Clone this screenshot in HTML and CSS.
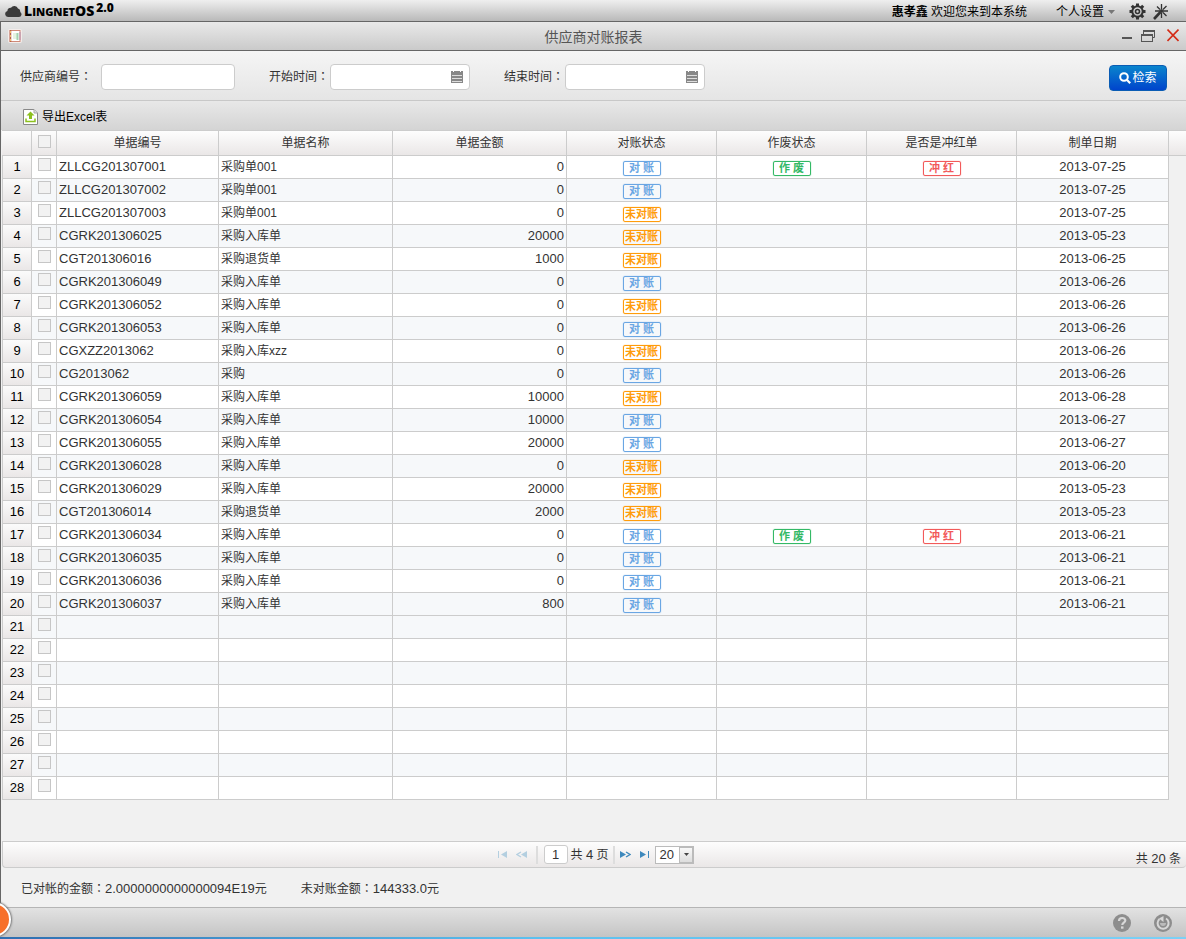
FILE: index.html
```
<!DOCTYPE html>
<html lang="zh-CN">
<head>
<meta charset="utf-8">
<title>供应商对账报表</title>
<link rel="stylesheet" href="styles.css">
</head>
<body>
<header class="topbar">
  <div class="brand">
    <svg class="cloud" width="17" height="12" viewBox="0 0 17 12"><path d="M3 12a3 3 0 0 1-.6-5.900A3.200 3.200 0 0 1 6 2.800 4 4 0 0 1 13 3.400 3.300 3.300 0 0 1 15.200 7 2.700 2.700 0 0 1 14 12z" fill="#3b3b3b"/></svg>
    <span class="name">L<small>INGNET</small>OS</span><sup class="version">2.0</sup>
  </div>
  <div class="user"><span><b>惠孝鑫</b> 欢迎您来到本系统</span>
    <button class="plain personal" type="button">个人设置<svg width="7" height="4" viewBox="0 0 7 4"><path d="M0 0h7L3.500 4z" fill="#777"/></svg></button>
    <button class="plain" type="button" aria-label="设置"><svg width="17" height="17" viewBox="0 0 17 17" fill="none" stroke="#333"><circle cx="8.500" cy="8.500" r="5.200" stroke-width="2"/><circle cx="8.500" cy="8.500" r="2" stroke-width="1.600"/><path stroke-width="3" d="M8.500 .5v2.500M8.500 14v2.500M.5 8.500H3M14 8.500h2.500M2.800 2.800l1.700 1.700M12.500 12.500l1.700 1.700M14.200 2.800l-1.700 1.700M4.500 12.500l-1.700 1.700"/></svg></button>
    <button class="plain" type="button" aria-label="换肤"><svg width="16" height="16" viewBox="0 0 16 16" stroke="#333" fill="none"><path d="M8.500 0v5M8.500 9v5M2 7h5M10 7h5M4 2.500L7 5.500M10 8.500l3.500 3.500M13.500 2L10 5.500" stroke-width="1.300"/><path d="M7.500 8L1 15" stroke-width="2.600"/><circle cx="8.500" cy="7" r="1.500" fill="#333"/></svg></button>
  </div>
</header>
<main class="window">
  <div class="titlebar">
    <svg width="14" height="14" viewBox="0 0 14 14"><rect width="14" height="14" rx="2" fill="#f3ecea"/><rect x="2" y="1.500" width="10" height="11" fill="#fff" stroke="#cf8a78"/><path d="M2.500 1v12" stroke="#b5604f" stroke-width="1.500"/><path d="M2.500 2v2M2.500 6v2M2.500 10v2" stroke="#f0c36a"/><path d="M5 4h4v6H5z" fill="#e6f3e2"/><path d="M9.500 4v7" stroke="#a2d3b0" stroke-width="2"/><path d="M12 3v8" stroke="#b58bb0"/></svg>
    <h1>供应商对账报表</h1>
    <div class="controls">
      <button class="plain" type="button" aria-label="最小化"><svg width="10" height="14" viewBox="0 0 10 14"><path d="M0 9h10" stroke="#555" stroke-width="2"/></svg></button>
      <button class="plain" type="button" aria-label="还原"><svg width="14" height="14" viewBox="0 0 14 14" fill="none" stroke="#555"><path d="M2.500 5V1.500h11v7H12"/><path d="M2 2h12" stroke-width="2"/><rect x=".5" y="5.500" width="11" height="7"/><path d="M0 6h12" stroke-width="2"/></svg></button>
      <button class="plain" type="button" aria-label="关闭"><svg width="12" height="14" viewBox="0 0 12 14"><path d="M.5 .5l11 11.500M11.500 .5l-11 11.500" stroke="#d42b16" stroke-width="1.600"/></svg></button>
    </div>
  </div>
  <form class="search">
    <div class="field supplier"><label for="supplier">供应商编号<span class="colon" lang="zh-TW">：</span></label><input id="supplier" class="box" type="text"></div>
    <div class="field"><label for="start">开始时间<span class="colon" lang="zh-TW">：</span></label><div class="date box"><input id="start" type="text"><svg width="12" height="13" viewBox="0 0 12 13"><path d="M0 1h12v12H0z" fill="#888"/><path d="M2.500 0v2M9.500 0v2" stroke="#fff"/><path d="M1 5.500h10M1 8.500h10M1 11.500h10" stroke="#ddd"/></svg></div></div>
    <div class="field"><label for="end">结束时间<span class="colon" lang="zh-TW">：</span></label><div class="date box"><input id="end" type="text"><svg width="12" height="13" viewBox="0 0 12 13"><path d="M0 1h12v12H0z" fill="#888"/><path d="M2.500 0v2M9.500 0v2" stroke="#fff"/><path d="M1 5.500h10M1 8.500h10M1 11.500h10" stroke="#ddd"/></svg></div></div>
    <button class="submit" type="button"><svg width="12" height="12" viewBox="0 0 12 12" fill="none" stroke="#fff"><circle cx="5" cy="5" r="3.800" stroke-width="2"/><path d="M7.800 7.800l3.400 3.400" stroke-width="2.200"/></svg>检索</button>
  </form>
  <div class="toolbar"><button class="plain export" type="button"><svg width="15" height="16" viewBox="0 0 15 16"><path d="M.5.5h10.500l3.500 3.500v11.500H.5z" fill="#fff" stroke="#888"/><path d="M11 .5V4h3.500" fill="#ddd" stroke="#aaa"/><path d="M7.500 2.500l4 4H9v3.500H6V6.500H3.500z" fill="#8cc01e"/><path d="M3 9.500v3h9v-3" fill="none" stroke="#8cc01e" stroke-width="1.500"/></svg>导出Excel表</button></div>
  <section class="grid">
    <table>
      <colgroup><col class="c-num"><col class="c-check"><col class="c-code"><col class="c-wide"><col class="c-wide"><col class="c-state"><col class="c-state"><col class="c-state"><col class="c-date"><col class="c-gap"></colgroup>
      <thead><tr><th></th><th class="pick"><input type="checkbox" aria-label="全选"></th><th>单据编号</th><th>单据名称</th><th>单据金额</th><th>对账状态</th><th>作废状态</th><th>是否是冲红单</th><th>制单日期</th><th></th></tr></thead>
      <tbody>
<tr><th>1</th><td class="pick"><input type="checkbox" aria-label="第1行"></td><td class="code">ZLLCG201307001</td><td>采购单001</td><td class="num">0</td><td class="state"><span class="stamp blue">对 账</span></td><td class="state"><span class="stamp green">作 废</span></td><td class="state"><span class="stamp red">冲 红</span></td><td class="day">2013-07-25</td><td></td></tr>
<tr><th>2</th><td class="pick"><input type="checkbox" aria-label="第2行"></td><td class="code">ZLLCG201307002</td><td>采购单001</td><td class="num">0</td><td class="state"><span class="stamp blue">对 账</span></td><td></td><td></td><td class="day">2013-07-25</td><td></td></tr>
<tr><th>3</th><td class="pick"><input type="checkbox" aria-label="第3行"></td><td class="code">ZLLCG201307003</td><td>采购单001</td><td class="num">0</td><td class="state"><span class="stamp orange">未对账</span></td><td></td><td></td><td class="day">2013-07-25</td><td></td></tr>
<tr><th>4</th><td class="pick"><input type="checkbox" aria-label="第4行"></td><td class="code">CGRK201306025</td><td>采购入库单</td><td class="num">20000</td><td class="state"><span class="stamp orange">未对账</span></td><td></td><td></td><td class="day">2013-05-23</td><td></td></tr>
<tr><th>5</th><td class="pick"><input type="checkbox" aria-label="第5行"></td><td class="code">CGT201306016</td><td>采购退货单</td><td class="num">1000</td><td class="state"><span class="stamp orange">未对账</span></td><td></td><td></td><td class="day">2013-06-25</td><td></td></tr>
<tr><th>6</th><td class="pick"><input type="checkbox" aria-label="第6行"></td><td class="code">CGRK201306049</td><td>采购入库单</td><td class="num">0</td><td class="state"><span class="stamp blue">对 账</span></td><td></td><td></td><td class="day">2013-06-26</td><td></td></tr>
<tr><th>7</th><td class="pick"><input type="checkbox" aria-label="第7行"></td><td class="code">CGRK201306052</td><td>采购入库单</td><td class="num">0</td><td class="state"><span class="stamp orange">未对账</span></td><td></td><td></td><td class="day">2013-06-26</td><td></td></tr>
<tr><th>8</th><td class="pick"><input type="checkbox" aria-label="第8行"></td><td class="code">CGRK201306053</td><td>采购入库单</td><td class="num">0</td><td class="state"><span class="stamp blue">对 账</span></td><td></td><td></td><td class="day">2013-06-26</td><td></td></tr>
<tr><th>9</th><td class="pick"><input type="checkbox" aria-label="第9行"></td><td class="code">CGXZZ2013062</td><td>采购入库xzz</td><td class="num">0</td><td class="state"><span class="stamp orange">未对账</span></td><td></td><td></td><td class="day">2013-06-26</td><td></td></tr>
<tr><th>10</th><td class="pick"><input type="checkbox" aria-label="第10行"></td><td class="code">CG2013062</td><td>采购</td><td class="num">0</td><td class="state"><span class="stamp blue">对 账</span></td><td></td><td></td><td class="day">2013-06-26</td><td></td></tr>
<tr><th>11</th><td class="pick"><input type="checkbox" aria-label="第11行"></td><td class="code">CGRK201306059</td><td>采购入库单</td><td class="num">10000</td><td class="state"><span class="stamp orange">未对账</span></td><td></td><td></td><td class="day">2013-06-28</td><td></td></tr>
<tr><th>12</th><td class="pick"><input type="checkbox" aria-label="第12行"></td><td class="code">CGRK201306054</td><td>采购入库单</td><td class="num">10000</td><td class="state"><span class="stamp blue">对 账</span></td><td></td><td></td><td class="day">2013-06-27</td><td></td></tr>
<tr><th>13</th><td class="pick"><input type="checkbox" aria-label="第13行"></td><td class="code">CGRK201306055</td><td>采购入库单</td><td class="num">20000</td><td class="state"><span class="stamp blue">对 账</span></td><td></td><td></td><td class="day">2013-06-27</td><td></td></tr>
<tr><th>14</th><td class="pick"><input type="checkbox" aria-label="第14行"></td><td class="code">CGRK201306028</td><td>采购入库单</td><td class="num">0</td><td class="state"><span class="stamp orange">未对账</span></td><td></td><td></td><td class="day">2013-06-20</td><td></td></tr>
<tr><th>15</th><td class="pick"><input type="checkbox" aria-label="第15行"></td><td class="code">CGRK201306029</td><td>采购入库单</td><td class="num">20000</td><td class="state"><span class="stamp orange">未对账</span></td><td></td><td></td><td class="day">2013-05-23</td><td></td></tr>
<tr><th>16</th><td class="pick"><input type="checkbox" aria-label="第16行"></td><td class="code">CGT201306014</td><td>采购退货单</td><td class="num">2000</td><td class="state"><span class="stamp orange">未对账</span></td><td></td><td></td><td class="day">2013-05-23</td><td></td></tr>
<tr><th>17</th><td class="pick"><input type="checkbox" aria-label="第17行"></td><td class="code">CGRK201306034</td><td>采购入库单</td><td class="num">0</td><td class="state"><span class="stamp blue">对 账</span></td><td class="state"><span class="stamp green">作 废</span></td><td class="state"><span class="stamp red">冲 红</span></td><td class="day">2013-06-21</td><td></td></tr>
<tr><th>18</th><td class="pick"><input type="checkbox" aria-label="第18行"></td><td class="code">CGRK201306035</td><td>采购入库单</td><td class="num">0</td><td class="state"><span class="stamp blue">对 账</span></td><td></td><td></td><td class="day">2013-06-21</td><td></td></tr>
<tr><th>19</th><td class="pick"><input type="checkbox" aria-label="第19行"></td><td class="code">CGRK201306036</td><td>采购入库单</td><td class="num">0</td><td class="state"><span class="stamp blue">对 账</span></td><td></td><td></td><td class="day">2013-06-21</td><td></td></tr>
<tr><th>20</th><td class="pick"><input type="checkbox" aria-label="第20行"></td><td class="code">CGRK201306037</td><td>采购入库单</td><td class="num">800</td><td class="state"><span class="stamp blue">对 账</span></td><td></td><td></td><td class="day">2013-06-21</td><td></td></tr>
<tr><th>21</th><td class="pick"><input type="checkbox" aria-label="第21行"></td><td></td><td></td><td></td><td></td><td></td><td></td><td></td><td></td></tr>
<tr><th>22</th><td class="pick"><input type="checkbox" aria-label="第22行"></td><td></td><td></td><td></td><td></td><td></td><td></td><td></td><td></td></tr>
<tr><th>23</th><td class="pick"><input type="checkbox" aria-label="第23行"></td><td></td><td></td><td></td><td></td><td></td><td></td><td></td><td></td></tr>
<tr><th>24</th><td class="pick"><input type="checkbox" aria-label="第24行"></td><td></td><td></td><td></td><td></td><td></td><td></td><td></td><td></td></tr>
<tr><th>25</th><td class="pick"><input type="checkbox" aria-label="第25行"></td><td></td><td></td><td></td><td></td><td></td><td></td><td></td><td></td></tr>
<tr><th>26</th><td class="pick"><input type="checkbox" aria-label="第26行"></td><td></td><td></td><td></td><td></td><td></td><td></td><td></td><td></td></tr>
<tr><th>27</th><td class="pick"><input type="checkbox" aria-label="第27行"></td><td></td><td></td><td></td><td></td><td></td><td></td><td></td><td></td></tr>
<tr><th>28</th><td class="pick"><input type="checkbox" aria-label="第28行"></td><td></td><td></td><td></td><td></td><td></td><td></td><td></td><td></td></tr>
      </tbody>
    </table>
    <div class="pager">
      <div class="pages">
        <button class="plain" type="button" aria-label="首页" disabled><svg width="11" height="7" viewBox="0 0 11 7" fill="#b4cfe0"><path d="M1 0h1v7H1zM10 0v7L4 3.500z"/></svg></button>
        <button class="plain" type="button" aria-label="上一页" disabled><svg width="12" height="7" viewBox="0 0 12 7"><path d="M5 1L1 3.500 5 6" fill="none" stroke="#b4cfe0" stroke-width="1.300"/><path d="M11 0v7L5 3.500z" fill="#b4cfe0"/></svg></button>
        <i class="sep"></i>
        <input class="page" type="text" value="1" aria-label="页码">
        <span class="count">共 <span class="digits">4</span> 页</span>
        <i class="sep"></i>
        <button class="plain next" type="button" aria-label="下一页"><svg width="12" height="7" viewBox="0 0 12 7"><path d="M7 1l4 2.500L7 6" fill="none" stroke="#4089bb" stroke-width="1.300"/><path d="M1 0v7l6-3.500z" fill="#3e89bd"/></svg></button>
        <button class="plain" type="button" aria-label="末页"><svg width="11" height="7" viewBox="0 0 11 7" fill="#3e89bd"><path d="M9 0h1v7H9zM1 0v7l6-3.500z"/></svg></button>
        <div class="size"><select aria-label="每页条数"><option>20</option></select><span class="arrow"><svg width="5" height="3" viewBox="0 0 5 3"><path d="M0 0h5L2.500 3z" fill="#444"/></svg></span></div>
      </div>
      <span class="total">共 <span class="digits">20</span> 条</span>
    </div>
  </section>
  <div class="sums"><span>已对帐的金额<span class="colon" lang="zh-TW">：</span><span class="digits">2.0000000000000094E19</span>元</span><span>未对账金额<span class="colon" lang="zh-TW">：</span><span class="digits">144333.0</span>元</span></div>
</main>
<footer class="taskbar">
  <span class="orb"></span>
  <button class="plain" type="button" aria-label="帮助"><svg width="18" height="18" viewBox="0 0 18 18"><circle cx="9" cy="9" r="9" fill="#8d8d8d"/><path d="M6 7c0-4 6.300-3.800 6.300-.6 0 2.200-3 2.100-3 4.500" fill="none" stroke="#d8d8d8" stroke-width="2.200"/><path d="M8 12.400h2.500v2.300H8z" fill="#d8d8d8"/></svg></button>
  <button class="plain" type="button" aria-label="刷新"><svg width="18" height="18" viewBox="0 0 18 18"><circle cx="9" cy="9" r="9" fill="#8d8d8d"/><path d="M5.500 5A5.500 5.500 0 1 0 12 4.500" fill="none" stroke="#d8d8d8" stroke-width="2"/><path d="M9.500 2v6L5 4.500z" fill="#d8d8d8"/><path d="M6 9a3 3 0 0 0 6 0" fill="#bbb"/></svg></button>
</footer>
</body>
</html>
```
FILE: styles.css
```
* { box-sizing: border-box; }
body {
  margin: 0;
  min-height: 100vh;
  display: flex;
  flex-direction: column;
  background: #f1f1f1;
  color: #333;
  font: 12px/16px "Liberation Sans", "Noto Sans CJK SC", sans-serif;
}
svg { display: block; flex: none; }
input, select, button { font: inherit; color: inherit; margin: 0; }
.plain { background: none; border: 0; padding: 0; }
.digits { font-size: 13px; }
.colon { font-family: "Noto Sans CJK TC", sans-serif; line-height: 1; }

.topbar {
  height: 22px;
  display: flex;
  justify-content: space-between;
  background: linear-gradient(#efefef, #b9b9b9);
  border-bottom: 1px solid #666;
  color: #000;
}
.brand { display: flex; padding-left: 5px; }
.cloud { margin-top: 5px; }
.name { margin-left: 2px; font: 800 14px/21px "Open Sans", sans-serif; }
.name small { font-size: 11px; }
.version { margin-left: 2px; font: 800 12px/16px "Open Sans", sans-serif; }
.user { display: flex; align-items: center; gap: 7px; padding: 2px 17px 0 0; }
.personal { display: flex; align-items: center; gap: 4px; margin: 0 7px 0 22px; }

.window { flex: 1; display: flex; flex-direction: column; border-left: 1px solid #666; }
.titlebar {
  height: 29px;
  display: grid;
  grid-template-columns: 1fr auto 1fr;
  align-items: center;
  padding: 0 7px;
  background: linear-gradient(#e9e9e9, #cacaca);
  border-bottom: 1px solid #666;
}
h1 { margin: 2px 0 0; font-size: 14px; font-weight: 400; color: #555; }
.controls { display: flex; justify-content: flex-end; gap: 9px; }
.controls button:last-child { margin-left: 3px; }

.search {
  height: 50px;
  display: flex;
  align-items: center;
  gap: 34px;
  padding: 2px 19px 0;
  background: linear-gradient(#f5f5f5, #e5e5e5);
  border-bottom: 1px solid #c8c8c8;
}
.field { display: flex; align-items: center; gap: 1px; }
.supplier { gap: 9px; }
.box { height: 26px; background: #fff; border: 1px solid #ccc; border-radius: 4px; }
.field > input { width: 134px; padding: 0 5px; }
.date { width: 140px; display: flex; align-items: center; padding: 0 6px 0 5px; }
.date input { flex: 1; min-width: 0; border: 0; padding: 0; background: none; }
.submit {
  width: 58px;
  height: 26px;
  margin: 3px 0 0 auto;
  display: flex;
  align-items: center;
  justify-content: center;
  gap: 1px;
  padding: 0;
  color: #fff;
  border: 1px solid #0a5cb4;
  border-radius: 4px;
  background: linear-gradient(#0a85cd, #0044cc);
}
.toolbar { height: 29px; display: flex; padding: 2px 22px 0; background: linear-gradient(#e8e8e8, #d4d4d4); }
.export { display: flex; align-items: center; gap: 4px; color: #000; }

.grid { flex: 1; display: flex; flex-direction: column; justify-content: space-between; margin-left: 1px; }
table { width: 100%; table-layout: fixed; border-collapse: separate; border-spacing: 0; }
.c-num { width: 30px; }
.c-check { width: 25px; }
.c-code { width: 162px; }
.c-wide { width: 174px; }
.c-state { width: 150px; }
.c-date { width: 152px; }
.c-gap { width: 17px; }
th, td { height: 23px; padding: 0 2px; border: solid #ccc; border-width: 0 1px 1px 0; }
th { font-weight: 400; }
thead th { height: 26px; border-top-width: 1px; background: linear-gradient(#fdfdfd, #eae7e7); }
thead th:last-child { border-right: 0; }
tbody tr { background: #fff; }
tbody tr:nth-child(even), tbody tr:nth-child(n+21):nth-child(odd) { background: #f6f8fa; }
tbody tr:nth-child(n+21):nth-child(even) { background: #fff; }
tbody th { font-size: 13px; color: #000; border-left-width: 1px; background: linear-gradient(#fbfbfb, #eae7e7); }
td:last-child { background: #f1f1f1; border: 0; }
.code, .num, .day { font-size: 13px; }
.num { text-align: right; }
.day { text-align: center; }
.pick { padding: 2px 0 0 6px; vertical-align: top; text-align: left; line-height: 0; }
thead .pick { padding-top: 4px; }
.pick input { appearance: none; display: block; width: 13px; height: 13px; background: #f2f2f2; border: 1px solid #c6c6c6; }
.state { padding-top: 3px; }
.stamp {
  display: block;
  width: 38px;
  margin: 0 auto;
  border: 1px solid;
  border-radius: 2px;
  box-shadow: 0 0 1px;
  font-size: 11px;
  line-height: 13px;
  font-weight: 700;
  text-align: center;
}
.blue { color: #6aa6e3; }
.orange { color: #ff9c0b; }
.green { color: #34b966; }
.red { color: #f25a5a; }

.pager {
  height: 27px;
  display: grid;
  grid-template-columns: 1fr auto 1fr;
  align-items: center;
  background: linear-gradient(#fdfdfd, #eae7e7);
  border: solid #ccc;
  border-width: 1px 0 1px 1px;
  border-radius: 0 0 4px 4px;
}
.pages { grid-column: 2; display: flex; align-items: center; gap: 8px; padding-left: 2px; }
.sep { width: 2px; height: 18px; background: #ddd; }
.page { width: 24px; height: 19px; padding: 0; margin-left: -2px; border: 1px solid #ccc; border-radius: 3px; background: #fff; font-size: 13px; text-align: center; }
.count { margin: 0 -3px 0 -5px; }
.next { margin-left: -4px; }
.size { width: 39px; height: 18px; display: flex; margin-left: -3px; position: relative; }
.size select { appearance: none; width: 100%; padding: 0 3px; border: 1px solid #bbb; border-radius: 0; background: #fff; font-size: 13px; }
.arrow { position: absolute; top: 1px; right: 1px; bottom: 1px; width: 14px; display: grid; place-items: center; border: 1px solid #bbb; background: linear-gradient(#f8f8f8, #ddd); pointer-events: none; }
.total { justify-self: end; padding: 8px 5px 0 0; }
.sums { display: flex; gap: 34px; padding: 13px 20px 10px; }

.taskbar {
  position: relative;
  height: 32px;
  display: flex;
  justify-content: flex-end;
  align-items: center;
  gap: 23px;
  padding: 0 14px 2px 0;
  background: linear-gradient(#e2e2e2, #c2c2c2);
  border-top: 1px solid #b5b5b5;
}
.taskbar::after { content: ""; position: absolute; left: 0; right: 0; bottom: 0; height: 2px; background: linear-gradient(90deg, #2f6eb0, #5cc0ee 45%, #7cd0f5); }
.orb { position: absolute; left: -24px; top: -6px; width: 35px; height: 35px; border: 2px solid #fff; border-radius: 50%; background: #f7702a; box-shadow: 0 0 2px 1px #777; }
```
